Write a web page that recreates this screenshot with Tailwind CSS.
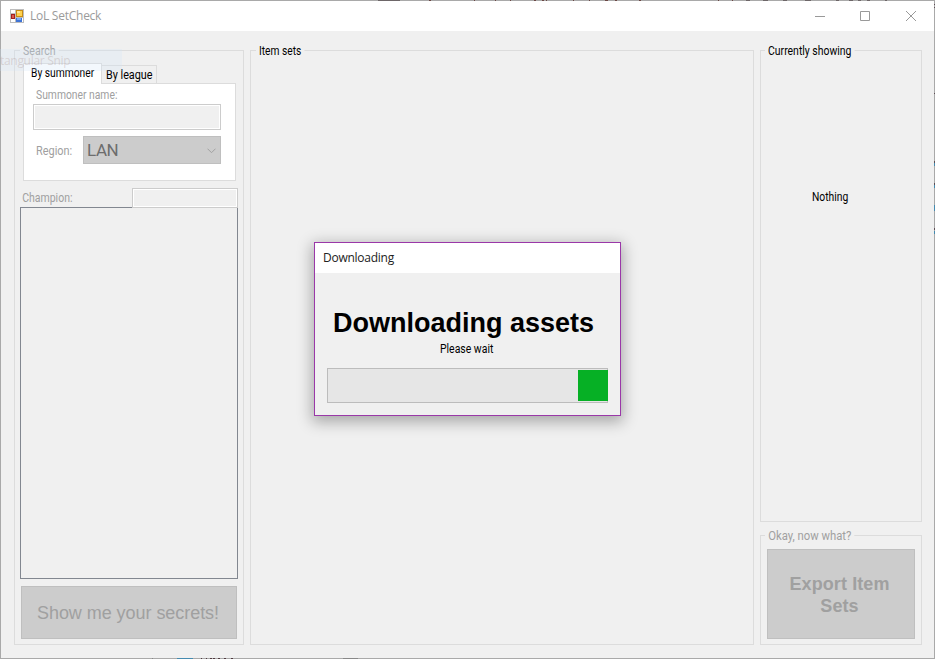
<!DOCTYPE html>
<html lang="en">
<head>
<meta charset="utf-8">
<title>LoL SetCheck</title>
<script src="https://cdn.jsdelivr.net/npm/@tailwindcss/browser@4"></script>
</head>
<body class="overflow-hidden">
<div class="relative flex h-[659px] w-[935px] flex-col border border-[#a9a9a9] bg-[#f0f0f0] font-[Roboto,sans-serif] text-[12px] leading-[14px] text-black">
  <!-- title bar -->
  <header class="flex h-[30px] shrink-0 items-center bg-white pl-[9px]">
    <svg class="mt-[-1px] h-[14px] w-[14px]" viewBox="0 0 14 14" shape-rendering="crispEdges">
      <rect width="14" height="14" fill="#bdbdbd"/><rect x="1" y="1" width="4" height="3" fill="#fff"/><rect x="1" y="10" width="4" height="3" fill="#fff"/><rect x="6" y="9" width="7" height="4" fill="#fff"/>
      <rect x="1" y="5" width="4" height="5" fill="#a32020"/><rect x="2" y="6" width="2" height="3" fill="#dc5a4c"/>
      <rect x="6" y="1" width="7" height="7" fill="#c88c14"/><rect x="7" y="2" width="5" height="5" fill="#ffd24e"/><rect x="7" y="2" width="3" height="2" fill="#ffe694"/>
      <rect x="6" y="9" width="6" height="4" fill="#3f74d6"/><rect x="7" y="9" width="4" height="2" fill="#7cabf5"/>
    </svg>
    <span class="ml-[6px] font-['Open_Sans',sans-serif] tracking-[-0.25px] text-[#9b9b9b]">LoL SetCheck</span>
    <svg class="ml-auto mr-[17px] h-[12px] w-[104px]" viewBox="0 0 104 12" fill="none" stroke="#999">
      <path d="M2 6.5h10M47.500 1.500h9v9h-9zM93 1l10 10M103 1l-10 10"/>
    </svg>
  </header>

  <main class="flex grow gap-[6px] pt-[19px] pr-[12px] pb-[13px] pl-[13px]">
    <!-- search -->
    <section class="relative flex w-[230px] flex-col border border-[#dcdcdc] px-[5px] pt-[12px]">
      <h2 class="absolute top-[-7px] left-[5px] origin-left scale-x-[0.88] bg-[#f0f0f0] px-[3.500px] text-[#a0a0a0]">Search</h2>
      <div class="relative mx-[3px] flex h-[20px] items-end">
        <div class="relative z-10 -mb-px h-[21px] w-[79px] border border-b-0 border-[#dcdcdc] bg-white pt-[2px] pl-[7px] whitespace-nowrap"><span class="block origin-left scale-x-[0.855]">By summoner</span></div>
        <div class="h-[18px] w-[55px] border border-b-0 border-l-0 border-[#dcdcdc] pt-[2px] pl-[4px] whitespace-nowrap"><span class="block origin-left scale-x-[0.9]">By league</span></div>
      </div>
      <div class="mx-[3px] h-[98px] w-[213px] border border-[#dcdcdc] bg-white pt-[4px] pl-[9px] text-[#a0a0a0]">
        <div class="origin-left scale-x-[0.86] pl-[3.500px]">Summoner name:</div>
        <div class="mt-[2px] h-[26px] w-[188px] border border-[#ccc] bg-white p-px"><div class="h-full bg-[#f0f0f0]"></div></div>
        <div class="mt-[6px] flex items-center">
          <span class="w-[50px] origin-left scale-x-[0.91] pt-[2px] pl-[3.300px]">Region:</span>
          <div class="flex h-[28px] w-[138px] items-center border border-[#bfbfbf] bg-[#ccc] pr-[4px] pl-[3px]">
            <span class="text-[17px] leading-[20px] tracking-[-0.4px] text-[#6d6d6d]">LAN</span>
            <svg class="ml-auto mt-[2px] h-[6px] w-[9px]" viewBox="0 0 9 6" fill="none" stroke="#a0a0a0"><path d="M.5.700l4 4 4-4"/></svg>
          </div>
        </div>
      </div>
      <div class="relative z-10 mt-[7px] flex h-[20px] w-[218px] justify-between">
        <span class="origin-left scale-x-[0.875] pt-[3px] pl-[2.500px] text-[#a0a0a0]">Champion:</span>
        <div class="w-[106px] border border-[#ccc] bg-white p-px"><div class="h-full bg-[#f0f0f0]"></div></div>
      </div>
      <div class="-mt-px h-[372px] w-[218px] border border-[#828790]"></div>
      <div class="mt-[7px] ml-px flex h-[53px] w-[216px] items-center justify-center border border-[#bfbfbf] bg-[#ccc] pt-px pr-[2px] font-['Liberation_Sans',sans-serif] text-[18px] leading-[22px] tracking-[-0.05px] whitespace-nowrap text-[#a0a0a0]">Show me your secrets!</div>
    </section>

    <!-- item sets -->
    <section class="relative w-[504px] border border-[#dcdcdc]">
      <h2 class="absolute top-[-7px] left-[5px] origin-left scale-x-[0.85] bg-[#f0f0f0] px-[3.500px]">Item sets</h2>
    </section>

    <div class="flex w-[162px] flex-col gap-[13px]">
      <section class="relative h-[472px] border border-[#dcdcdc] pt-[139px]">
        <h2 class="absolute top-[-7px] left-[4px] origin-left scale-x-[0.87] bg-[#f0f0f0] px-[3.500px] whitespace-nowrap">Currently showing</h2>
        <p class="ml-[51px] origin-left scale-x-[0.86]">Nothing</p>
      </section>
      <section class="relative h-[110px] border border-[#dcdcdc] pt-[13px] pl-[6px]">
        <h2 class="absolute top-[-7px] left-[4px] origin-left scale-x-[0.94] bg-[#f0f0f0] px-[3.500px] whitespace-nowrap text-[#a0a0a0]">Okay, now what?</h2>
        <div class="flex h-[90px] w-[148px] items-center justify-center border border-[#bfbfbf] bg-[#ccc] pt-px pr-[3px] text-center font-['Liberation_Sans',sans-serif] text-[18px] leading-[22px] font-bold tracking-[0.1px] text-[#a0a0a0]">Export Item<br>Sets</div>
      </section>
    </div>
  </main>

  <!-- fading tooltip over the search panel -->
  <div class="absolute top-[48px] left-[-1px] z-20 h-[22px] w-[122px] overflow-hidden bg-[#cfe2f6]/25 pt-[5px] font-['Open_Sans',sans-serif] leading-[14px] tracking-[-0.3px] whitespace-nowrap text-[#b09a98]/35">tangular Snip</div>

  <!-- desktop fragments at the window edge -->
  <svg class="pointer-events-none absolute top-[-1px] left-[-1px] z-20 h-[659px] w-[935px]" viewBox="0 0 935 659" shape-rendering="crispEdges">
    <path d="M378 .5h22M746 .5h4M763 .5h5M783 .5h4M805 .5h6M836 .5h3M849 .5h4M858 .5h3M867 .5h3M885 .5h2" stroke="#6d6668"/>
    <path d="M429 .5h2M474 .5h1M495 .5h1M510 .5h1M534 .5h2M542 .5h2M546 .5h1M573 .5h1M589 .5h1M605 .5h3M615 .5h2M639 .5h2M718 .5h1M732 .5h1" stroke="#6b4744"/>
    <path d="M934.500 4v1M934.500 7v1M934.500 93v1M934.500 161v2M934.500 183v2M934.500 228v2" stroke="#5d4e55"/>
    <path d="M934.500 163v3M934.500 185v3M934.500 205v6M934.500 231v3M177 658.500h16" stroke="#458bb0"/>
    <path d="M201 658.500h1M206 658.500h1M210 658.500h2M213 658.500h2M218 658.500h2M224 658.500h2M231 658.500h2" stroke="#503a40"/>
    <path d="M343 658.500h15M152 658.500h1" stroke="#888"/>
  </svg>

  <!-- download dialog -->
  <div class="absolute top-[241px] left-[313px] z-30 flex h-[174px] w-[307px] flex-col border border-[#9a38a8] bg-[#f0f0f0] shadow-[0_4px_14px_2px_rgba(0,0,0,0.3)]">
    <div class="h-[30px] bg-white pt-[8px] pl-[8px] font-['Open_Sans',sans-serif] tracking-[-0.25px] text-[#222]">Downloading</div>
    <h1 class="mt-[34px] pl-[18px] font-['Liberation_Sans',sans-serif] text-[27px] leading-[32px] font-bold whitespace-nowrap">Downloading assets</h1>
    <p class="mt-[3px] ml-[125px] origin-left scale-x-[0.87]">Please wait</p>
    <div class="mt-[12px] ml-[12px] flex h-[35px] w-[281px] justify-end border border-[#bcbcbc] bg-[#e6e6e6] py-px">
      <div class="-mr-px h-[31px] w-[30px] bg-[#06b025]"></div>
    </div>
  </div>
</div>
</body>
</html>
